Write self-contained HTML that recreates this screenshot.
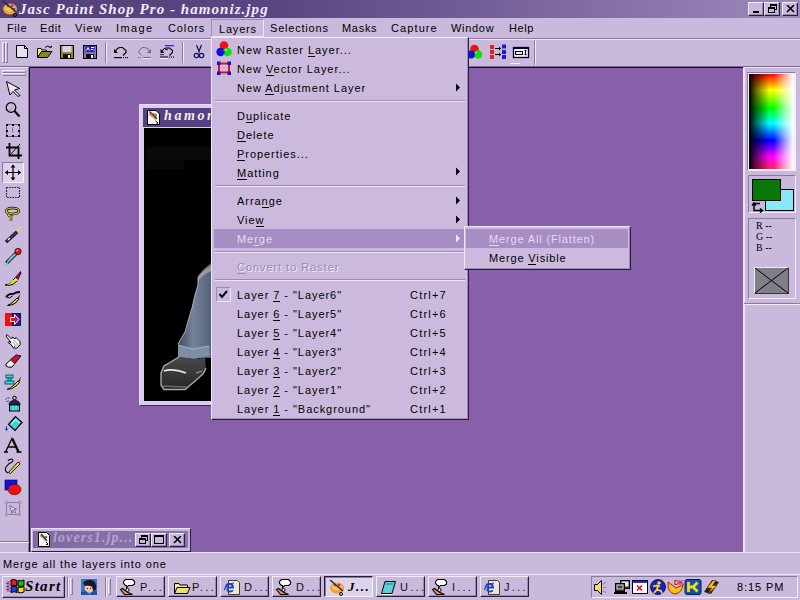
<!DOCTYPE html>
<html><head><meta charset="utf-8">
<style>
*{margin:0;padding:0;box-sizing:border-box}
html,body{width:800px;height:600px;overflow:hidden;background:#c9b9dc;font-family:"Liberation Sans",sans-serif;font-size:11px;color:#000}
.a{position:absolute}
.t{position:absolute;white-space:nowrap;font-size:11px;letter-spacing:0.8px;line-height:13px}
#title{left:0;top:0;width:800px;height:18px;background:linear-gradient(90deg,#53407a 0%,#5a4682 35%,#9c88ba 100%)}
#menubar{left:0;top:18px;width:800px;height:21px;background:#c9b9dc;border-bottom:1px solid #8e78a8}
#toolbar{left:0;top:39px;width:800px;height:28px;background:#c9b9dc;border-top:1px solid #ece2f6;border-bottom:1px solid #7a6a94}
#ws{left:29px;top:67px;width:714px;height:485px;background:#8760a9;border-top:1px solid #1a0c2c;border-left:1px solid #1a0c2c}
#lpal{left:0;top:67px;width:29px;height:485px;background:#c9b9dc;border-top:1px solid #f0e8f8;border-right:1px solid #8a7aa2}
#rpal{left:743px;top:67px;width:57px;height:486px;background:#c9b9dc;border-left:2px solid #eee4f8;border-top:1px solid #eee4f8;border-bottom:1px solid #8a7aa2}
#status{left:0;top:552px;width:800px;height:22px;background:#c9b9dc;border-top:1px solid #ece2f6}
#taskbar{left:0;top:574px;width:800px;height:26px;background:#c9b9dc;border-top:1px solid #efe8f8}
.btn{position:absolute;background:#c9b9dc;border-top:1px solid #f2ecfa;border-left:1px solid #f2ecfa;border-right:1px solid #2a1c3c;border-bottom:1px solid #2a1c3c;box-shadow:inset -1px -1px 0 #9d8db5}
.menu{position:absolute;background:#cbbadd;border-top:1px solid #efe6f8;border-left:1px solid #efe6f8;border-right:1px solid #2a1c3c;border-bottom:1px solid #2a1c3c;box-shadow:inset -1px -1px 0 #9d8db5}
.sep{position:absolute;height:2px;border-top:1px solid #9d8db5;border-bottom:1px solid #efe6f8}
u{text-decoration:none;border-bottom:1px solid currentColor}
</style></head><body>
<!-- title bar -->
<div id="title" class="a"></div>
<svg class="a" style="left:1px;top:0px" width="18" height="17" viewBox="0 0 18 17">
<ellipse cx="9" cy="9" rx="7" ry="5.5" fill="#f0a030"/>
<ellipse cx="9" cy="8" rx="5" ry="3.5" fill="#f8c860"/>
<circle cx="7" cy="6" r="1.5" fill="#30a030"/><circle cx="11" cy="6" r="1.5" fill="#e03030"/><circle cx="13" cy="9" r="1.3" fill="#3050d0"/>
<line x1="2" y1="1" x2="15" y2="12" stroke="#302050" stroke-width="1.6"/>
<circle cx="14" cy="15" r="1.6" fill="none" stroke="#000" stroke-width="1"/>
</svg>
<div class="t" style="left:19px;top:1px;color:#f2eafa;font-family:'Liberation Serif',serif;font-style:italic;font-weight:bold;font-size:15px;letter-spacing:1.05px;line-height:16px">Jasc Paint Shop Pro - hamoniz.jpg</div>
<div class="btn" style="left:748px;top:2px;width:16px;height:14px"><div class="a" style="left:4px;top:8px;width:6px;height:2px;background:#000"></div></div>
<div class="btn" style="left:764px;top:2px;width:16px;height:14px"><div class="a" style="left:5px;top:1px;width:7px;height:6px;border:1px solid #000;border-top-width:2px"></div><div class="a" style="left:3px;top:4px;width:7px;height:6px;border:1px solid #000;border-top-width:2px;background:#c9b9dc"></div></div>
<div class="btn" style="left:782px;top:2px;width:16px;height:14px"><svg class="a" style="left:3px;top:2px" width="9" height="8"><path d="M1 0L8 7M8 0L1 7" stroke="#000" stroke-width="1.6"/></svg></div>
<div id="menubar" class="a"></div>
<div class="t" style="left:7px;top:22px;letter-spacing:0.6px">File</div>
<div class="t" style="left:40px;top:22px;letter-spacing:0.6px">Edit</div>
<div class="t" style="left:75px;top:22px;letter-spacing:0.9px">View</div>
<div class="t" style="left:116px;top:22px;letter-spacing:1.4px">Image</div>
<div class="t" style="left:168px;top:22px;letter-spacing:0.9px">Colors</div>
<div class="a" style="left:211px;top:19px;width:53px;height:18px;border-top:1px solid #9d8db5;border-left:1px solid #9d8db5;border-right:1px solid #efe6f8;border-bottom:1px solid #efe6f8"></div>
<div class="t" style="left:219px;top:23px;letter-spacing:0.8px">Layers</div>
<div class="t" style="left:270px;top:22px;letter-spacing:0.8px">Selections</div>
<div class="t" style="left:342px;top:22px;letter-spacing:0.7px">Masks</div>
<div class="t" style="left:391px;top:22px;letter-spacing:1.1px">Capture</div>
<div class="t" style="left:451px;top:22px;letter-spacing:0.7px">Window</div>
<div class="t" style="left:509px;top:22px;letter-spacing:0.6px">Help</div>
<div id="toolbar" class="a"></div>
<div class="a" style="left:2px;top:42px;width:3px;height:21px;border-left:1px solid #f2ecfa;border-right:1px solid #8a7aa2;border-top:1px solid #f2ecfa;border-bottom:1px solid #8a7aa2"></div>
<div class="a" style="left:5px;top:42px;width:3px;height:21px;border-left:1px solid #f2ecfa;border-right:1px solid #8a7aa2;border-top:1px solid #f2ecfa;border-bottom:1px solid #8a7aa2"></div>
<svg class="a" style="left:0;top:38px" width="211" height="29" viewBox="0 38 211 29">
<!-- new -->
<path d="M16.5 45.5H24.5L27.5 48.5V57.5H16.5Z" fill="#e6e0ee" stroke="#000" stroke-width="1"/>
<path d="M24.5 45.5V48.5H27.5" fill="none" stroke="#000" stroke-width="1"/>
<!-- open -->
<path d="M37.5 48.5H41l1 1.5H46.5V52H42L37.5 57.5Z" fill="#f0f080" stroke="#000" stroke-width="1"/>
<path d="M37.5 57.5L41.5 51.5H52L47.5 57.5Z" fill="#888820" stroke="#000" stroke-width="1"/>
<path d="M45 47.5Q47.5 44.5 50.5 47.5" fill="none" stroke="#000" stroke-width="1"/>
<path d="M49 47.5H52V45.5Z" fill="#000"/>
<!-- save -->
<rect x="60.5" y="45.5" width="13" height="13" fill="#8a8a28" stroke="#000"/>
<rect x="62.5" y="46" width="9" height="6" fill="#dcd4e8"/>
<rect x="63" y="54" width="8" height="4.5" fill="#101010"/>
<rect x="68" y="55" width="2" height="3" fill="#f0f0f0"/>
<!-- save as -->
<rect x="83.5" y="45.5" width="13" height="13" fill="#8474a8" stroke="#000"/>
<rect x="85.5" y="46" width="9" height="6" fill="#2020c8"/>
<path d="M86.5 50.5l1.5-3 1.5 3M91 47.5h3M91 49.5h2l1 1" stroke="#fff" stroke-width="1" fill="none"/>
<rect x="86" y="54" width="8" height="4.5" fill="#101010"/>
<rect x="91" y="55" width="2" height="3" fill="#f0f0f0"/>
<!-- sep -->
<line x1="105.5" y1="42" x2="105.5" y2="63" stroke="#8a7aa2"/><line x1="106.5" y1="42" x2="106.5" y2="63" stroke="#f2ecfa"/>
<!-- undo -->
<path d="M115.5 51.5Q117 47.5 120.5 47.5H122.5L126 50.5V52.5L123 55.5" fill="none" stroke="#000" stroke-width="1.2"/>
<path d="M114 49V53H118Z" fill="#000"/>
<rect x="114" y="57" width="8" height="1.2" fill="#000"/>
<rect x="123" y="57" width="1" height="1.2" fill="#000"/><rect x="125" y="57" width="1" height="1.2" fill="#000"/><rect x="127" y="57" width="1" height="1.2" fill="#000"/>
<!-- redo disabled -->
<path d="M149.5 51.5Q148 47.5 144.5 47.5H142.5L139 50.5V52.5L142 55.5" fill="none" stroke="#6e6286" stroke-width="1"/>
<path d="M151 49V53H147Z" fill="#6e6286"/>
<rect x="143" y="57" width="8" height="1" fill="#6e6286"/><rect x="143" y="58" width="8" height="1" fill="#f2ecfa"/>
<rect x="138" y="57" width="1" height="1" fill="#6e6286"/><rect x="140" y="57" width="1" height="1" fill="#6e6286"/>
<!-- undo history -->
<path d="M162 51.5Q163.5 48 167 48H169.5L172.5 50.5V52.5L169.5 55.5" fill="none" stroke="#000" stroke-width="1.1"/>
<path d="M160.5 49V53H164.5Z" fill="#000"/>
<rect x="165" y="45" width="9" height="1.3" fill="#2a2ad0"/>
<rect x="165" y="49" width="3" height="1.2" fill="#2a2ad0"/>
<rect x="160" y="54" width="4" height="1.2" fill="#2a2ad0"/>
<rect x="160" y="56.5" width="8" height="1.2" fill="#000"/>
<rect x="160" y="57.8" width="8" height="1.2" fill="#f4f0fa"/>
<rect x="169" y="56.5" width="1" height="1.2" fill="#000"/><rect x="171" y="56.5" width="1" height="1.2" fill="#000"/><rect x="173" y="56.5" width="1" height="1.2" fill="#000"/>
<!-- sep -->
<line x1="182.5" y1="42" x2="182.5" y2="63" stroke="#8a7aa2"/><line x1="183.5" y1="42" x2="183.5" y2="63" stroke="#f2ecfa"/>
<!-- scissors -->
<path d="M196.5 45L199.5 52.5M201.5 45L198.5 52.5" stroke="#101060" stroke-width="1.2" fill="none"/>
<circle cx="196.5" cy="55.5" r="2.2" fill="none" stroke="#101060" stroke-width="1.2"/>
<circle cx="201.5" cy="55.5" r="2.2" fill="none" stroke="#101060" stroke-width="1.2"/>
</svg>
<svg class="a" style="left:468px;top:38px" width="80" height="29" viewBox="468 38 80 29">
<circle cx="474.5" cy="49" r="4.3" fill="#f01010"/>
<circle cx="478" cy="54.5" r="4.2" fill="#10e010"/>
<circle cx="471" cy="54.5" r="4" fill="#1010e0"/>
<path d="M474.5 53.5L476 51.5 477 53Z" fill="#f0f040"/>
<rect x="490" y="45" width="4" height="4" fill="#e02020"/><rect x="490" y="50" width="4" height="4" fill="#e02020"/><rect x="490" y="55" width="4" height="4" fill="#e02020"/>
<path d="M495 48.5h5M495 54.5h5" stroke="#000" stroke-width="1.2"/>
<path d="M499 46.5l2 2-2 2ZM499 52.5l2 2-2 2Z" fill="#000"/>
<rect x="502" y="44.5" width="4" height="4" fill="#1c1cd0"/><rect x="502" y="50" width="4" height="4" fill="#1c1cd0"/><rect x="502" y="55" width="4" height="4" fill="#1c1cd0"/>
<rect x="513.5" y="47.5" width="15" height="10" fill="#f4f0fa" stroke="#000030" stroke-width="1.3"/>
<rect x="513" y="47" width="16" height="2" fill="#000030"/>
<rect x="515.5" y="51.5" width="7" height="3" fill="none" stroke="#000" stroke-width="1"/>
<path d="M525.5 50v5" stroke="#000" stroke-width="1"/>
<path d="M524 51h3l-1.5-1.5ZM524 54h3l-1.5 1.5Z" fill="#000"/>
<rect x="510" y="63" width="10" height="1" fill="#f0eafa"/>
<line x1="534.5" y1="40" x2="534.5" y2="65" stroke="#8a7aa2"/><line x1="535.5" y1="40" x2="535.5" y2="65" stroke="#f2ecfa"/>
</svg>
<div id="lpal" class="a"></div>
<div class="a" style="left:2px;top:70px;width:24px;height:3px;border-top:1px solid #f2ecfa;border-bottom:1px solid #8a7aa2;border-left:1px solid #f2ecfa;border-right:1px solid #8a7aa2"></div>
<div class="a" style="left:2px;top:73px;width:24px;height:3px;border-top:1px solid #f2ecfa;border-bottom:1px solid #8a7aa2;border-left:1px solid #f2ecfa;border-right:1px solid #8a7aa2"></div>
<div class="a" style="left:2px;top:162px;width:22px;height:21px;background:#ddd2ea;border-top:1px solid #8a7aa2;border-left:1px solid #8a7aa2;border-right:1px solid #f6f0fc;border-bottom:1px solid #f6f0fc"></div>
<div class="a" style="left:0;top:541px;width:29px;height:1px;background:#8a7aa2"></div>
<div class="a" style="left:0;top:542px;width:29px;height:1px;background:#f2ecfa"></div>
<svg class="a" style="left:0;top:67px" width="29" height="475" viewBox="0 67 29 475">
<!-- arrow -->
<path d="M6.5 81.5L19.5 88.5L14.5 90L20 95.5L18 96.5L13 91.5L10 95Z" fill="#ece6f4" stroke="#000" stroke-width="1"/>
<!-- magnifier -->
<circle cx="11" cy="107.5" r="4.8" fill="none" stroke="#000" stroke-width="1.3"/>
<path d="M14.5 111L19.5 116.5" stroke="#000" stroke-width="2"/>
<path d="M9 109.5l1 1 2-2" stroke="#8a7aa2" fill="none" stroke-width="0.8"/>
<!-- select -->
<path d="M6.5 124.5h13v12h-13Z" fill="none" stroke="#000" stroke-width="1" stroke-dasharray="1 1"/>
<path d="M6 124h2v2h-2ZM12 124h2v2h-2ZM18 124h2v2h-2ZM6 130h2v2h-2ZM18 130h2v2h-2ZM6 135h2v2h-2ZM12 135h2v2h-2ZM18 135h2v2h-2Z" fill="#000"/>
<path d="M12.5 127.5v5" stroke="#8070a0" stroke-width="1"/>
<!-- crop -->
<path d="M9.5 143v12.5H22M6 147.5H18.5V159" fill="none" stroke="#000" stroke-width="1.8"/>
<path d="M10 155L20 144" stroke="#000" stroke-width="1"/>
<!-- move -->
<path d="M13 165v15M5.5 172.5h15" stroke="#000" stroke-width="1.2"/>
<path d="M13 164.5l-2.5 3h5ZM13 180.5l-2.5-3h5ZM5 172.5l3-2.5v5ZM21 172.5l-3-2.5v5Z" fill="#000"/>
<!-- marquee -->
<rect x="6.5" y="187.5" width="13" height="10" fill="none" stroke="#201830" stroke-width="1.1" stroke-dasharray="1.6 1"/>
<!-- lasso -->
<ellipse cx="12.5" cy="211" rx="6.5" ry="3" fill="none" stroke="#000" stroke-width="2.4"/>
<ellipse cx="12.5" cy="211" rx="6.5" ry="3" fill="none" stroke="#e8e020" stroke-width="1.2"/>
<path d="M9.5 213.5Q7 216 11 216L11 221" fill="none" stroke="#000" stroke-width="2.4"/>
<path d="M9.5 213.5Q7 216 11 216L11 221" fill="none" stroke="#e8e020" stroke-width="1.2"/>
<!-- magic wand -->
<path d="M6 242L17 232" stroke="#000" stroke-width="3.2"/>
<path d="M6.5 241.5L16.5 232.5" stroke="#5a3a8a" stroke-width="1.6"/>
<path d="M8 240l2-2" stroke="#fff" stroke-width="1.4"/>
<path d="M17.5 230l2.5-2M18 229.5l1.5 1.5M20 227l1 1" stroke="#f0e040" stroke-width="1.2"/>
<!-- dropper -->
<path d="M6.5 263L16 253.5" stroke="#000" stroke-width="3.6"/>
<path d="M7 262.5L15.5 254" stroke="#60c8d0" stroke-width="1.8"/>
<path d="M9 259.5L14 254.5" stroke="#e8f8f8" stroke-width="0.8"/>
<circle cx="18" cy="251.5" r="3.2" fill="#d01818" stroke="#401010" stroke-width="0.8"/>
<circle cx="17.3" cy="250.6" r="1" fill="#f8a0a0"/>
<path d="M5.5 264.5l2.5-1" stroke="#40e0e0" stroke-width="1.6"/>
<!-- brush -->
<path d="M5 285Q8 284.5 11 282L15 278L17.5 280.5L13.5 284Q10 286 5 285Z" fill="#e8e020" stroke="#000" stroke-width="1"/>
<path d="M7 284Q10 283 13 280" stroke="#f8f8a0" stroke-width="0.8" fill="none"/>
<path d="M15 278L20.5 271.5L21 273L17.5 280.5Z" fill="#a01020" stroke="#300010" stroke-width="0.8"/>
<path d="M15 278.5l2.5 2" stroke="#fff" stroke-width="1.2"/>
<!-- clone -->
<path d="M6 297Q9 293 13 294Q16 292 20 292" fill="none" stroke="#000" stroke-width="1.8"/>
<path d="M6.5 297l3 1 3-2" fill="none" stroke="#000" stroke-width="1"/>
<path d="M7.5 305.5Q11 304 13.5 301.5L17 298L18.5 299.5L15.5 303Q12 305.5 7.5 305.5Z" fill="#d8d820" stroke="#000" stroke-width="1"/>
<path d="M17 298L20.5 294L18.5 299.5Z" fill="#401020"/>
<!-- color replacer -->
<rect x="5" y="313" width="8" height="13" fill="#f01010"/>
<rect x="12.5" y="313.5" width="8" height="12" fill="#1020c0" stroke="#000" stroke-width="0.8"/>
<path d="M10.5 317.5H14.5V314.5L19 319.5L14.5 324.5V321.5H10.5Z" fill="#f01010" stroke="#fff" stroke-width="1"/>
<!-- retouch hand -->
<path d="M7 334.5L11.5 339L12.5 337L15 339L16 337.5L20 341.5V345L17 348H13.5L10.5 344L8 342.5L9 341.5L11 342.5L6 336Z" fill="#fff" stroke="#000" stroke-width="1"/>
<path d="M14 340.5l1 1M16 342.5l1 1M13 342.5l1 1M15 344.5l1 1M17 344.5l1 1M14 346l1 .5" stroke="#000" stroke-width="0.9"/>
<!-- eraser -->
<path d="M6 364L16 355L21 356L12 367Q8 368 6 366Z" fill="#f4f0f6" stroke="#000" stroke-width="1"/>
<path d="M10.5 360L16 355L21 356L14 363Z" fill="#c01828" stroke="#500818" stroke-width="0.8"/>
<!-- stamp / picture tube -->
<rect x="6" y="375" width="7" height="3" fill="#30e0e0" stroke="#004050" stroke-width="0.8"/>
<rect x="8" y="378" width="3" height="3" fill="#30e0e0" stroke="#004050" stroke-width="0.8"/>
<rect x="5" y="381" width="9" height="3" fill="#30e0e0" stroke="#004050" stroke-width="0.8"/>
<path d="M7 389.5Q11 388 14 385L18 381L19.5 382.5L16 386Q12 389.5 7 389.5Z" fill="#e0e020" stroke="#000" stroke-width="0.9"/>
<path d="M18 381L21 376.5L19.5 382.5Z" fill="#701020"/>
<!-- airbrush -->
<path d="M5.5 399.5l2-1.5M6.5 401.5l2.5-.5M8 397.5l1.5 1" stroke="#3030e0" stroke-width="1"/>
<circle cx="14.5" cy="398" r="1.8" fill="none" stroke="#000" stroke-width="1"/>
<path d="M9 405Q9 400.5 14.5 400.5Q20 400.5 20 405Z" fill="#2a2050" stroke="#000" stroke-width="0.8"/>
<rect x="9.5" y="405" width="10" height="6" fill="#30c8d0" stroke="#000" stroke-width="1"/>
<path d="M13 405.5v5M16 405.5v5" stroke="#a0f0f0" stroke-width="0.8"/>
<!-- flood fill -->
<path d="M8.5 424.5L15.5 416.5L22 422.5L15 430.5Z" fill="#40d0d0" stroke="#000" stroke-width="1.2"/>
<path d="M11 424.5L15.5 419.5L19.5 423" fill="none" stroke="#a8f4f4" stroke-width="1.2"/>
<path d="M6.5 426v4M5 428.5l1.5 2 1.5-2" fill="none" stroke="#2030c0" stroke-width="1"/>
<!-- text -->
<path d="M5.5 452L12 438.5L19 452M8.5 447h7M4 452h4M16.5 452h5" fill="none" stroke="#000" stroke-width="1.3"/><path d="M12.5 439L18.5 452" stroke="#000" stroke-width="2.2"/>
<!-- draw line -->
<path d="M8 473Q4 471 6 467Q9 463 12 462Q14 460 12 459Q9 459 8 461" fill="none" stroke="#000" stroke-width="1.1"/>
<path d="M8.5 472.5L10.5 473.5L20 464L18 462Z" fill="#f0d840" stroke="#000" stroke-width="0.9"/>
<path d="M18 462L20.5 461.5L20 464Z" fill="#e02050"/>
<!-- shapes -->
<rect x="5" y="480" width="12" height="10" fill="#1010e0" stroke="#000040" stroke-width="0.6"/>
<ellipse cx="14.5" cy="489.5" rx="6.5" ry="5.2" fill="#f01010" stroke="#600000" stroke-width="0.6"/>
<!-- object selector -->
<rect x="6.5" y="502.5" width="13" height="12" fill="none" stroke="#8a7aa2" stroke-width="1"/>
<circle cx="6.5" cy="502.5" r="1.3" fill="#c9b9dc" stroke="#8a7aa2" stroke-width="0.8"/>
<circle cx="19.5" cy="502.5" r="1.3" fill="#c9b9dc" stroke="#8a7aa2" stroke-width="0.8"/>
<circle cx="6.5" cy="514.5" r="1.3" fill="#c9b9dc" stroke="#8a7aa2" stroke-width="0.8"/>
<circle cx="19.5" cy="514.5" r="1.3" fill="#c9b9dc" stroke="#8a7aa2" stroke-width="0.8"/>
<path d="M9.5 505.5l7 3.5-3 .5 2.5 2.5-1 1-2.5-2.5-.5 3Z" fill="#dcd0ea" stroke="#7a6a96" stroke-width="0.9"/>
</svg>
<div id="ws" class="a"></div>
<div id="rpal" class="a"></div>
<div class="a" style="left:747px;top:72px;width:49px;height:99px;border-top:1px solid #8a7aa2;border-left:1px solid #8a7aa2;border-right:1px solid #f2ecfa;border-bottom:1px solid #f2ecfa"></div>
<div class="a" style="left:748px;top:73px;width:47px;height:97px;border:1px solid #f4eefa"></div>
<div class="a" style="left:749px;top:74px;width:45px;height:95px;background:linear-gradient(180deg,#ff0000 0%,#ffff00 17%,#00ff00 36%,#00ffff 52%,#0000ff 70%,#ff00ff 87%,#ff2060 100%)"></div>
<div class="a" style="left:749px;top:74px;width:45px;height:95px;background:linear-gradient(90deg,#000 0%,rgba(0,0,0,0.6) 15%,rgba(0,0,0,0) 45%,rgba(255,255,255,0) 55%,rgba(255,255,255,0.7) 85%,#fff 100%)"></div>
<div class="a" style="left:748px;top:175px;width:48px;height:38px;border-top:1px solid #8a7aa2;border-left:1px solid #8a7aa2;border-right:1px solid #f2ecfa;border-bottom:1px solid #f2ecfa"></div>
<div class="a" style="left:765px;top:189px;width:29px;height:22px;background:#88e8f8;border:1px solid #000"></div>
<div class="a" style="left:752px;top:179px;width:29px;height:22px;background:#087808;border:1px solid #000"></div>
<svg class="a" style="left:750px;top:200px" width="16" height="13"><path d="M4 10V3.5H10M2 5.5L4 3 6 5.5M4 7.5V10.5H12M10 8.5L12.5 10.5 10 12.5" fill="none" stroke="#000" stroke-width="1.5"/></svg>
<div class="a" style="left:748px;top:218px;width:48px;height:81px;border-top:1px solid #8a7aa2;border-left:1px solid #8a7aa2;border-right:1px solid #f2ecfa;border-bottom:1px solid #f2ecfa"></div>
<div class="t" style="left:756px;top:220px;font-family:'Liberation Serif',serif;font-size:10px;line-height:11px;letter-spacing:0">R <span style="font-family:'Liberation Sans'">--</span></div>
<div class="t" style="left:756px;top:231px;font-family:'Liberation Serif',serif;font-size:10px;line-height:11px;letter-spacing:0">G <span style="font-family:'Liberation Sans'">--</span></div>
<div class="t" style="left:756px;top:242px;font-family:'Liberation Serif',serif;font-size:10px;line-height:11px;letter-spacing:0">B <span style="font-family:'Liberation Sans'">--</span></div>
<div class="a" style="left:754px;top:267px;width:35px;height:27px;background:#807e86;border-top:1px solid #f2ecfa;border-left:1px solid #f2ecfa;border-right:1px solid #3a3040;border-bottom:1px solid #3a3040"></div>
<svg class="a" style="left:755px;top:268px" width="33" height="25"><path d="M0 0L33 25M33 0L0 25" stroke="#000" stroke-width="1"/></svg>
<div class="a" style="left:744px;top:303px;width:56px;height:1px;background:#8a7aa2"></div>
<div class="a" style="left:744px;top:304px;width:56px;height:1px;background:#f2ecfa"></div>
<!-- image window -->
<div class="a" style="left:139px;top:104px;width:80px;height:302px;background:#dccdf0;border-bottom:1px solid #3a2a50;border-top:1px solid #e8dcf6;border-left:1px solid #e8dcf6"></div>
<div class="a" style="left:143px;top:108px;width:72px;height:19px;background:#54417e"></div>
<svg class="a" style="left:146px;top:109px" width="15" height="17" viewBox="0 0 15 17">
<path d="M1.5 1.5H10L13.5 5V15.5H1.5Z" fill="#f8f4ee" stroke="#000"/>
<path d="M3 4Q8 3 11 8L9 11Q6 7 3 6.5Z" fill="#f0a030"/><path d="M3.5 2.5L11 10" stroke="#2020a0" stroke-width="1.3"/><circle cx="9.5" cy="6" r="1.5" fill="#30b030"/><circle cx="7" cy="5" r="1" fill="#e03030"/>
<path d="M9.5 12l2.5 2M10 15h2" stroke="#000" stroke-width="1"/>
</svg>
<div class="t" style="left:164px;top:108px;color:#f4eefa;font-family:'Liberation Serif',serif;font-style:italic;font-weight:bold;font-size:14px;line-height:16px;letter-spacing:2.6px">hamoniz.jpg</div>
<svg class="a" style="left:144px;top:128px" width="67" height="273" viewBox="144 128 67 273">
<rect x="144" y="128" width="67" height="273" fill="#000"/>
<rect x="146" y="147" width="65" height="13" fill="#090909"/>
<rect x="146" y="160" width="38" height="10" fill="#070707"/>
<!-- jeans -->
<defs>
<linearGradient id="jg" x1="0" y1="0" x2="1" y2="0"><stop offset="0" stop-color="#424a5a"/><stop offset="0.45" stop-color="#74829a"/><stop offset="1" stop-color="#56627a"/></linearGradient>
<linearGradient id="sg" x1="0" y1="0" x2="0" y2="1"><stop offset="0" stop-color="#4a4a4c"/><stop offset="1" stop-color="#262628"/></linearGradient>
</defs>
<path d="M211 263L204 269L198 276L198 285L195 295L192 308L189 318L185 332L178 344L178 357L211 358Z" fill="url(#jg)"/>
<path d="M198 277L198 285L195 295L192 308L189 318L185 332L178 344" fill="none" stroke="#b8c0cc" stroke-width="0.9"/>
<path d="M198 277Q203 270 211 266L211 271Q204 274 199 280Z" fill="#b8ae9c" opacity="0.7"/>
<path d="M178 345L193 349L209 346L210 356L194 359L178 357Z" fill="#7e8ea6"/>
<path d="M178 345L193 349L209 346" fill="none" stroke="#aab6c8" stroke-width="0.9"/>
<!-- shoe -->
<path d="M179 357L194 359L205 358L206 370L203 374L194 382L185 389.5L164 389.5L161 385L161 373L164 366Z" fill="url(#sg)"/>
<path d="M179 357L164 366L161 373L161 385L164 389.5L185 389.5L194 382L203 374L206 368" fill="none" stroke="#a8a8a8" stroke-width="1.4"/>
<path d="M164 371Q172 368 186 373" fill="none" stroke="#e8e8e8" stroke-width="1.6"/>
<path d="M163 386L186 387" stroke="#6a6a6a" stroke-width="1.3"/>
<path d="M196 373L202 371" stroke="#9a9a9a" stroke-width="1.2"/>
</svg>
<!-- layers menu -->
<div class="menu" style="left:211px;top:37px;width:258px;height:383px"></div>
<svg class="a" style="left:211px;top:37px" width="30" height="45" viewBox="211 37 30 45">
<circle cx="224" cy="45.5" r="4.3" fill="#f01010"/>
<circle cx="227.5" cy="52" r="4.3" fill="#10e010"/>
<circle cx="220.5" cy="52" r="4.2" fill="#1010e0"/>
<path d="M224 51L226 48.5 227 50.5Z" fill="#e8e840"/>
<path d="M223 50l1 1.5 1-1.5" fill="#20d0d0"/>
<rect x="219" y="63.5" width="10" height="9" fill="none" stroke="#e81010" stroke-width="2"/>
<rect x="217" y="61.5" width="3.5" height="3.5" fill="#1010d0"/><rect x="227.5" y="61.5" width="3.5" height="3.5" fill="#1010d0"/>
<rect x="217" y="71.5" width="3.5" height="3.5" fill="#1010d0"/><rect x="227.5" y="71.5" width="3.5" height="3.5" fill="#1010d0"/>
</svg>
<div class="t" style="letter-spacing:0.95px;left:237px;top:44px;color:#000">New Raster <u>L</u>ayer...</div>
<div class="t" style="letter-spacing:0.95px;left:237px;top:63px;color:#000">New <u>V</u>ector Layer...</div>
<div class="t" style="letter-spacing:0.95px;left:237px;top:82px;color:#000">New <u>A</u>djustment Layer</div>
<div class="sep" style="left:215px;top:100px;width:250px"></div>
<div class="t" style="letter-spacing:0.95px;left:237px;top:110px;color:#000">D<u>u</u>plicate</div>
<div class="t" style="letter-spacing:0.95px;left:237px;top:129px;color:#000"><u>D</u>elete</div>
<div class="t" style="letter-spacing:0.95px;left:237px;top:148px;color:#000"><u>P</u>roperties...</div>
<div class="t" style="letter-spacing:0.95px;left:237px;top:167px;color:#000"><u>M</u>atting</div>
<div class="sep" style="left:215px;top:185px;width:250px"></div>
<div class="t" style="letter-spacing:0.95px;left:237px;top:195px;color:#000">Arra<u>n</u>ge</div>
<div class="t" style="letter-spacing:0.95px;left:237px;top:214px;color:#000">Vie<u>w</u></div>
<div class="a" style="left:214px;top:229px;width:250px;height:19px;background:#a68dc3"></div>
<div class="t" style="letter-spacing:0.95px;left:237px;top:233px;color:#e4dcee">Me<u>r</u>ge</div>
<div class="sep" style="left:215px;top:251px;width:250px"></div>
<div class="t" style="letter-spacing:0.95px;left:238px;top:262px;color:#f2ecfa">Convert to Raster</div>
<div class="t" style="letter-spacing:0.95px;left:237px;top:261px;color:#9a8ab4"><u>C</u>onvert to Raster</div>
<div class="sep" style="left:215px;top:279px;width:250px"></div>
<div class="a" style="left:216px;top:287px;width:15px;height:15px;border-top:1px solid #9d8db5;border-left:1px solid #9d8db5;border-right:1px solid #efe6f8;border-bottom:1px solid #efe6f8"></div>
<svg class="a" style="left:216px;top:287px" width="15" height="15"><path d="M3.5 7l2.5 3 5-6" fill="none" stroke="#000" stroke-width="2"/></svg>
<div class="t" style="letter-spacing:0.95px;left:237px;top:289px;color:#000">Layer <u>7</u> - "Layer6"</div>
<div class="t" style="left:410px;top:289px;letter-spacing:1.2px">Ctrl+7</div>
<div class="t" style="letter-spacing:0.95px;left:237px;top:308px;color:#000">Layer <u>6</u> - "Layer5"</div>
<div class="t" style="left:410px;top:308px;letter-spacing:1.2px">Ctrl+6</div>
<div class="t" style="letter-spacing:0.95px;left:237px;top:327px;color:#000">Layer <u>5</u> - "Layer4"</div>
<div class="t" style="left:410px;top:327px;letter-spacing:1.2px">Ctrl+5</div>
<div class="t" style="letter-spacing:0.95px;left:237px;top:346px;color:#000">Layer <u>4</u> - "Layer3"</div>
<div class="t" style="left:410px;top:346px;letter-spacing:1.2px">Ctrl+4</div>
<div class="t" style="letter-spacing:0.95px;left:237px;top:365px;color:#000">Layer <u>3</u> - "Layer2"</div>
<div class="t" style="left:410px;top:365px;letter-spacing:1.2px">Ctrl+3</div>
<div class="t" style="letter-spacing:0.95px;left:237px;top:384px;color:#000">Layer <u>2</u> - "Layer1"</div>
<div class="t" style="left:410px;top:384px;letter-spacing:1.2px">Ctrl+2</div>
<div class="t" style="letter-spacing:0.95px;left:237px;top:403px;color:#000">Layer <u>1</u> - "Background"</div>
<div class="t" style="left:410px;top:403px;letter-spacing:1.2px">Ctrl+1</div>
<svg class="a" style="left:455px;top:83px" width="6" height="9"><path d="M1 0.5L5 4.5L1 8.5Z" fill="#000"/></svg>
<svg class="a" style="left:455px;top:167px" width="6" height="9"><path d="M1 0.5L5 4.5L1 8.5Z" fill="#000"/></svg>
<svg class="a" style="left:455px;top:196px" width="6" height="9"><path d="M1 0.5L5 4.5L1 8.5Z" fill="#000"/></svg>
<svg class="a" style="left:455px;top:215px" width="6" height="9"><path d="M1 0.5L5 4.5L1 8.5Z" fill="#000"/></svg>
<svg class="a" style="left:455px;top:234px" width="6" height="9"><path d="M1 0.5L5 4.5L1 8.5Z" fill="#f0eaf8"/></svg>
<div class="menu" style="left:464px;top:226px;width:167px;height:44px"></div>
<div class="a" style="left:466px;top:229px;width:162px;height:19px;background:#a68dc3"></div>
<div class="t" style="left:489px;top:233px;color:#e4dcee;letter-spacing:0.85px"><u>M</u>erge All (Flatten)</div>
<div class="t" style="left:489px;top:252px;letter-spacing:0.85px">Merge <u>V</u>isible</div>
<div id="status" class="a"></div>
<div id="taskbar" class="a"></div>
<div class="t" style="left:3px;top:558px;letter-spacing:0.88px">Merge all the layers into one</div>
<!-- minimized window -->
<div class="a" style="left:31px;top:528px;width:160px;height:24px;background:#c9b9dc;border-top:1px solid #eee6f8;border-left:1px solid #eee6f8;border-right:1px solid #2a1c3c;border-bottom:1px solid #2a1c3c"></div>
<div class="a" style="left:33px;top:531px;width:155px;height:17px;background:linear-gradient(90deg,#806aa2,#8a74ac)"></div>
<svg class="a" style="left:37px;top:531px" width="14" height="17" viewBox="0 0 14 17">
<path d="M1.5 1.5H9.5L12.5 4.5V15.5H1.5Z" fill="#f8f4ee" stroke="#000"/>
<path d="M3 4Q7 3 10 7L8 10Q5 6 3 6Z" fill="#f0a030"/><path d="M4 3L10 10" stroke="#2020a0" stroke-width="1.2"/><circle cx="9" cy="6" r="1.3" fill="#30a030"/>
<path d="M9 11l2 2M9 13.5h2" stroke="#000" stroke-width="1"/>
</svg>
<div class="t" style="left:53px;top:530px;color:#b4a4cc;font-family:'Liberation Serif',serif;font-style:italic;font-weight:bold;font-size:14px;line-height:16px;letter-spacing:1.1px">lovers1.jp...</div>
<div class="btn" style="left:135px;top:533px;width:16px;height:14px"><div class="a" style="left:5px;top:1px;width:7px;height:6px;border:1px solid #000;border-top-width:2px"></div><div class="a" style="left:3px;top:4px;width:7px;height:6px;border:1px solid #000;border-top-width:2px;background:#c9b9dc"></div></div>
<div class="btn" style="left:151px;top:533px;width:16px;height:14px"><div class="a" style="left:2px;top:1px;width:10px;height:9px;border:1px solid #000;border-top-width:2px"></div></div>
<div class="btn" style="left:169px;top:533px;width:16px;height:14px"><svg class="a" style="left:3px;top:2px" width="9" height="8"><path d="M1 0L8 7M8 0L1 7" stroke="#000" stroke-width="1.6"/></svg></div>
<!-- start -->
<div class="btn" style="left:2px;top:576px;width:63px;height:22px"></div>
<svg class="a" style="left:6px;top:578px" width="20" height="17" viewBox="0 0 20 17">
<path d="M1 4h3M1 7h3M1 10h3M1 13h3" stroke="#e02020" stroke-width="1.2"/>
<path d="M0 5.5h3M0 8.5h3M0 11.5h3" stroke="#2040e0" stroke-width="1.2"/>
<path d="M5 2Q8 1 11 2.5V8Q8 6.5 5 8Z" fill="#f01818" stroke="#000" stroke-width="1"/>
<path d="M12 2.5Q15 3.5 18 2V7.5Q15 9 12 8Z" fill="#18c018" stroke="#000" stroke-width="1"/>
<path d="M5 9Q8 7.5 11 9V14.5Q8 13 5 14.5Z" fill="#2040f0" stroke="#000" stroke-width="1"/>
<path d="M12 9Q15 10 18 8.5V14Q15 15.5 12 14.5Z" fill="#f0e020" stroke="#000" stroke-width="1"/>
</svg>
<div class="t" style="left:25px;top:578px;font-family:'Liberation Serif',serif;font-style:italic;font-weight:bold;font-size:15px;line-height:17px;letter-spacing:1.3px">Start</div>
<div class="a" style="left:67px;top:577px;width:2px;height:20px;border-left:1px solid #8a7aa2;border-right:1px solid #f2ecfa"></div><div class="a" style="left:70px;top:578px;width:3px;height:17px;border-left:1px solid #f2ecfa;border-right:1px solid #8a7aa2;border-top:1px solid #f2ecfa;border-bottom:1px solid #8a7aa2"></div>
<svg class="a" style="left:81px;top:579px" width="16" height="16"><rect width="16" height="16" fill="#2860a8"/><path d="M0 0H16V16H0Z" fill="#3a78c0"/><path d="M2 4Q5 0 11 1Q16 3 15 10L13 13L11 8Q8 6 4 7Z" fill="#1a1828"/><path d="M4 7Q8 6 11 8L12 12Q9 15 6 13Q3 11 4 7Z" fill="#f0c8a8"/><path d="M6 9.5h1M9 9.5h1" stroke="#302020"/><path d="M0 13L5 12L8 16H0ZM16 12L11 13L9 16H16Z" fill="#1850b0"/></svg>
<div class="a" style="left:105px;top:577px;width:2px;height:20px;border-left:1px solid #8a7aa2;border-right:1px solid #f2ecfa"></div><div class="a" style="left:108px;top:578px;width:3px;height:17px;border-left:1px solid #f2ecfa;border-right:1px solid #8a7aa2;border-top:1px solid #f2ecfa;border-bottom:1px solid #8a7aa2"></div>
<div class="btn" style="left:116px;top:576px;width:49px;height:21px"><svg class="a" style="left:2px;top:2px" width="18" height="18"><path d="M1.5 10.5L3.5 9.5L9 13.5L13.5 15.5H5.5Z" fill="#e88868" stroke="#000" stroke-width="1.1"/><path d="M6.5 0.5H13.5L15.5 2.5V5L13.5 6.5H9.5L7.5 9L7.5 6.5H6.5L4.5 4.5V2.5Z" fill="#fff" stroke="#000" stroke-width="1.1"/><circle cx="8.5" cy="11" r="1.6" fill="#fff" stroke="#000" stroke-width="1"/></svg><div class="t" style="left:23px;top:4px;font-family:'Liberation Sans',sans-serif;font-size:11px;letter-spacing:2.2px;color:#101010">P...</div></div>
<div class="btn" style="left:168px;top:576px;width:49px;height:21px"><svg class="a" style="left:4px;top:3px" width="18" height="14"><path d="M1.5 3.5H6l1 1.5h7.5v8h-13Z" fill="#f0e890" stroke="#000"/><path d="M1.5 13.5L4 7.5h13l-2.5 6Z" fill="#e8e070" stroke="#000"/></svg><div class="t" style="left:23px;top:4px;font-family:'Liberation Sans',sans-serif;font-size:11px;letter-spacing:2.2px;color:#101010">P...</div></div>
<div class="btn" style="left:220px;top:576px;width:49px;height:21px"><svg class="a" style="left:3px;top:2px" width="19" height="18"><path d="M4.5 1.5h9l2 2v12h-11Z" fill="#ece8d8" stroke="#403c30" stroke-width="1"/><path d="M2 8.5Q2 5 5.5 5Q9 5 9 8.5H3M3 10Q4 13 7 12.5L9 11.5" fill="none" stroke="#1840c8" stroke-width="1.8"/><path d="M0.5 11Q1 5 10 4" fill="none" stroke="#1840c8" stroke-width="1.1"/></svg><div class="t" style="left:23px;top:4px;font-family:'Liberation Sans',sans-serif;font-size:11px;letter-spacing:2.2px;color:#101010">D...</div></div>
<div class="btn" style="left:272px;top:576px;width:49px;height:21px"><svg class="a" style="left:2px;top:2px" width="18" height="18"><path d="M1.5 10.5L3.5 9.5L9 13.5L13.5 15.5H5.5Z" fill="#e88868" stroke="#000" stroke-width="1.1"/><path d="M6.5 0.5H13.5L15.5 2.5V5L13.5 6.5H9.5L7.5 9L7.5 6.5H6.5L4.5 4.5V2.5Z" fill="#fff" stroke="#000" stroke-width="1.1"/><circle cx="8.5" cy="11" r="1.6" fill="#fff" stroke="#000" stroke-width="1"/></svg><div class="t" style="left:23px;top:4px;font-family:'Liberation Sans',sans-serif;font-size:11px;letter-spacing:2.2px;color:#101010">D...</div></div>
<div class="a" style="left:324px;top:576px;width:49px;height:21px;background:#ddd3ea;border-top:1px solid #2a1c3c;border-left:1px solid #2a1c3c;border-right:1px solid #f6f0fc;border-bottom:1px solid #f6f0fc;box-shadow:inset 1px 1px 0 #8a7aa2"><svg class="a" style="left:3px;top:2px" width="18" height="17"><ellipse cx="9" cy="9" rx="7" ry="5.5" fill="#f0a030"/><ellipse cx="9" cy="8" rx="5" ry="3.5" fill="#f8c860"/><circle cx="7" cy="6" r="1.5" fill="#30a030"/><circle cx="11" cy="6" r="1.5" fill="#e03030"/><line x1="2" y1="1" x2="15" y2="12" stroke="#302050" stroke-width="1.6"/><circle cx="13" cy="15" r="1.5" fill="none" stroke="#000"/></svg><div class="t" style="left:23px;top:3px;font-weight:bold;font-style:italic;font-family:'Liberation Serif',serif;font-size:13px;letter-spacing:1.5px">J...</div></div>
<div class="btn" style="left:376px;top:576px;width:49px;height:21px"><svg class="a" style="left:3px;top:2px" width="17" height="17"><path d="M1.5 14.5L5 2.5H15.5L12 14.5Z" fill="#60d0d8" stroke="#000" stroke-width="1"/><path d="M2 15.5H12" stroke="#fff" stroke-width="1"/><path d="M6 5h7" stroke="#208090" stroke-width="1"/></svg><div class="t" style="left:23px;top:4px;font-family:'Liberation Sans',sans-serif;font-size:11px;letter-spacing:2.2px;color:#101010">U...</div></div>
<div class="btn" style="left:428px;top:576px;width:49px;height:21px"><svg class="a" style="left:2px;top:2px" width="18" height="18"><path d="M1.5 10.5L3.5 9.5L9 13.5L13.5 15.5H5.5Z" fill="#e88868" stroke="#000" stroke-width="1.1"/><path d="M6.5 0.5H13.5L15.5 2.5V5L13.5 6.5H9.5L7.5 9L7.5 6.5H6.5L4.5 4.5V2.5Z" fill="#fff" stroke="#000" stroke-width="1.1"/><circle cx="8.5" cy="11" r="1.6" fill="#fff" stroke="#000" stroke-width="1"/></svg><div class="t" style="left:23px;top:4px;font-family:'Liberation Sans',sans-serif;font-size:11px;letter-spacing:2.2px;color:#101010">I...</div></div>
<div class="btn" style="left:480px;top:576px;width:49px;height:21px"><svg class="a" style="left:3px;top:2px" width="19" height="18"><path d="M4.5 1.5h9l2 2v12h-11Z" fill="#ece8d8" stroke="#403c30" stroke-width="1"/><path d="M2 8.5Q2 5 5.5 5Q9 5 9 8.5H3M3 10Q4 13 7 12.5L9 11.5" fill="none" stroke="#1840c8" stroke-width="1.8"/><path d="M0.5 11Q1 5 10 4" fill="none" stroke="#1840c8" stroke-width="1.1"/></svg><div class="t" style="left:23px;top:4px;font-family:'Liberation Sans',sans-serif;font-size:11px;letter-spacing:2.2px;color:#101010">J...</div></div>
<div class="a" style="left:591px;top:576px;width:207px;height:22px;border-top:1px solid #8a7aa2;border-left:1px solid #8a7aa2;border-bottom:1px solid #f2ecfa;border-right:1px solid #f2ecfa"></div>
<svg class="a" style="left:592px;top:578px" width="130" height="19" viewBox="592 578 130 19">
<path d="M594.5 584.5h3l4-4v14l-4-4h-3Z" fill="#f0e060" stroke="#000" stroke-width="1"/>
<path d="M603 584l3-1.5M603 587.5h3M603 591l3 1.5" stroke="#8a7aa2" stroke-width="1"/>
<rect x="620.5" y="580.5" width="9" height="8" fill="#303030" stroke="#000"/><rect x="621.5" y="581.5" width="7" height="5" fill="#e8e8e8"/>
<rect x="615.5" y="583.5" width="9" height="8" fill="#303030" stroke="#000"/><rect x="616.5" y="584.5" width="7" height="5" fill="#d8d8d8"/><rect x="617.5" y="585.5" width="5" height="3" fill="#404040"/>
<rect x="614" y="592" width="13" height="2" fill="#000"/>
<rect x="632.5" y="580.5" width="15" height="13" fill="#fff" stroke="#000"/><rect x="633" y="581" width="14" height="2" fill="#1c2ad0"/>
<path d="M637 585.5l5 5M642 585.5l-5 5" stroke="#e01010" stroke-width="1.6"/>
<circle cx="658" cy="587" r="7.5" fill="#1c1cc8" stroke="#000030" stroke-width="0.8"/>
<circle cx="659" cy="583" r="1.8" fill="#f8e020"/>
<path d="M653 586.5L657 585.5L660 586.5M658 585.5L657 589.5L654 593M657 589.5L661 591L662 593.5" fill="none" stroke="#f8e020" stroke-width="1.8"/>
<path d="M668 582Q667 593 675 594Q682 593 683 585L676 588Z" fill="#f0c020" stroke="#c02000" stroke-width="1"/>
<text x="674" y="585" font-family="Liberation Sans" font-size="7" font-weight="bold" fill="#d02020">DK</text>
<rect x="685" y="579.5" width="16" height="15" rx="2" fill="#1850a8" stroke="#002050" stroke-width="1"/>
<path d="M688.5 582v10M688.5 587L693 587L697.5 582.5M693 587L697.5 591.5" fill="none" stroke="#e8e020" stroke-width="2.8"/>
<path d="M704 592L712 580L719 582L711 594Z" fill="#302010"/>
<path d="M713 580.5L707 588H711.5L708 594L717 585.5H712.5L716 580.5Z" fill="#f8c818" stroke="#503000" stroke-width="0.6"/>
</svg>
<div class="t" style="left:737px;top:581px;letter-spacing:0.9px">8:15 PM</div>
</body></html>
